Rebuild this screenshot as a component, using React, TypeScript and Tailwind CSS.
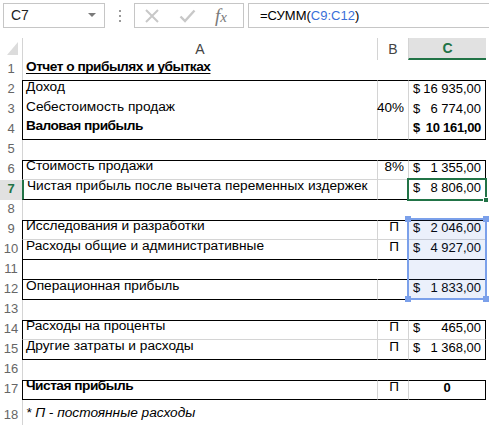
import { ReactNode } from "react";

type Line = "black" | "gray";

type Row = {
  n: number;
  a?: ReactNode;
  b?: string;
  c?: [string, string];
  cCenter?: string;
  bold?: boolean;
  box?: boolean;
  inner?: boolean;
  top?: Line;
  bottom?: Line;
  h?: string;
};

const rows: Row[] = [
  {
    n: 1,
    a: <span className="font-bold tracking-[-0.5px] underline underline-offset-2">Отчет о прибылях и убытках</span>,
  },
  { n: 2, a: "Доход", c: ["$", "16 935,00"], box: true, inner: true, top: "black" },
  { n: 3, a: "Себестоимость продаж", b: "40%", c: ["$", "6 774,00"], box: true, inner: true },
  { n: 4, a: "Валовая прибыль", c: ["$", "10 161,00"], bold: true, box: true, inner: true, bottom: "black" },
  { n: 5 },
  { n: 6, a: "Стоимость продажи", b: "8%", c: ["$", "1 355,00"], box: true, inner: true, top: "black", bottom: "gray" },
  { n: 7, a: "Чистая прибыль после вычета переменных издержек", c: ["$", "8 806,00"], box: true, inner: true, bottom: "black" },
  { n: 8 },
  { n: 9, a: "Исследования и разработки", b: "П", c: ["$", "2 046,00"], box: true, inner: true, top: "black", bottom: "gray" },
  { n: 10, a: "Расходы общие и административные", b: "П", c: ["$", "4 927,00"], box: true, inner: true, bottom: "black" },
  { n: 11, box: true, bottom: "black" },
  { n: 12, a: "Операционная прибыль", c: ["$", "1 833,00"], box: true, inner: true, bottom: "black" },
  { n: 13 },
  { n: 14, a: "Расходы на проценты", b: "П", c: ["$", "465,00"], box: true, inner: true, top: "black", bottom: "gray" },
  { n: 15, a: "Другие затраты и расходы", b: "П", c: ["$", "1 368,00"], box: true, inner: true, bottom: "black" },
  { n: 16 },
  { n: 17, a: "Чистая прибыль", b: "П", cCenter: "0", bold: true, box: true, inner: true, top: "black", bottom: "black" },
  { n: 18, a: <span className="italic">* П - постоянные расходы</span>, h: "h-[26px]" },
];

function lineClasses(row: Row) {
  const t =
    row.top === "black" ? "border-t border-t-black" : row.top === "gray" ? "border-t border-t-[#d4d4d4]" : "";
  const b =
    row.bottom === "black" ? "border-b border-b-black" : row.bottom === "gray" ? "border-b border-b-[#d4d4d4]" : "";
  return `${t} ${b}`;
}

function SheetRow({ row }: { row: Row }) {
  const lines = lineClasses(row);
  const active = row.n === 7;
  const leftA = active
    ? "border-l-2 border-l-[#217346]"
    : row.box
      ? "border-l border-l-black"
      : "border-l border-l-[#d4d4d4]";
  const innerL = row.inner ? "border-l border-l-[#d4d4d4]" : "border-l border-l-transparent";
  // "П" marks are centred, percentages are right-aligned
  const bAlign = row.b === "П" ? "justify-center pl-[2px] font-normal" : "justify-end pr-[4px]";

  return (
    <div className={`flex ${row.h || "h-[20px]"}`}>
      <div
        className={`w-[22px] flex items-end justify-center pb-[2px] text-[13px] ${
          active ? "bg-[#e1e1e1] text-[#217346] font-bold" : "text-[#666666]"
        }`}
      >
        {row.n}
      </div>
      <div
        className={`w-[355px] flex items-end pl-[3px] pb-[2px] whitespace-nowrap text-[13.7px] ${leftA} ${lines} ${
          row.bold ? "font-bold tracking-[-0.5px]" : ""
        }`}
      >
        {row.a}
      </div>
      <div className={`w-[31px] flex items-end pb-[2px] text-[13.5px] ${bAlign} ${innerL} ${lines}`}>{row.b}</div>
      <div
        className={`w-[78px] flex items-end pb-[2px] whitespace-nowrap text-[13px] ${innerL} ${
          row.box ? "border-r border-r-black" : ""
        } ${lines} ${row.bold ? "font-bold" : ""} ${row.cCenter ? "justify-center" : "justify-between pl-[4px] pr-[4px]"}`}
      >
        {row.c && (
          <>
            <span>{row.c[0]}</span>
            <span className={row.bold ? "tracking-[-0.3px]" : ""}>{row.c[1]}</span>
          </>
        )}
        {row.cCenter}
      </div>
    </div>
  );
}

function FormulaBar() {
  return (
    <div className="h-[36px] flex items-start pt-[3px]">
      <div className="ml-[3px] w-[102px] h-[25px] border border-[#c6c6c6] flex items-center justify-between pl-[7px] pr-[8px]">
        <span className="text-[14px] text-[#222222]">C7</span>
        <svg width="8" height="5" viewBox="0 0 8 5">
          <path d="M0 0 L8 0 L4 4 Z" fill="#7a7a7a" />
        </svg>
      </div>
      <div className="w-[29px] h-[25px] flex flex-col items-center justify-center gap-[3px]">
        <span className="w-[2px] h-[2px] bg-[#9a9a9a]" />
        <span className="w-[2px] h-[2px] bg-[#9a9a9a]" />
        <span className="w-[2px] h-[2px] bg-[#9a9a9a]" />
      </div>
      <div className="w-[110px] h-[25px] border border-[#c6c6c6] flex items-center pl-[9px] gap-[19px]">
        <svg width="16" height="16" viewBox="0 0 16 16">
          <path d="M2 2 L14 14 M14 2 L2 14" stroke="#c8c8c8" strokeWidth="2" fill="none" />
        </svg>
        <svg width="17" height="16" viewBox="0 0 17 16">
          <path d="M1.5 8.5 L6 13 L15.5 2.5" stroke="#c8c8c8" strokeWidth="2.4" fill="none" />
        </svg>
        <span className="italic text-[#7a7a7a] text-[19px] leading-none font-['Liberation_Serif',serif]">
          f<span className="text-[15px]">x</span>
        </span>
      </div>
      <div className="ml-[4px] flex-1 h-[25px] border border-r-0 border-[#c6c6c6] flex items-center pl-[11px] text-[13px]">
        <span>
          =СУММ(<span className="text-[#3a6fd8]">C9:C12</span>)
        </span>
      </div>
    </div>
  );
}

function HeaderRow() {
  return (
    <div className="flex h-[24px] text-[14px] text-[#444444]">
      <div className="w-[22px] relative">
        <svg className="absolute left-[7px] top-[6px]" width="12" height="13" viewBox="0 0 12 13">
          <path d="M11 0 L11 13 L0 13 Z" fill="#dcdcdc" />
        </svg>
      </div>
      <div className="w-[355px] border-l border-l-[#d4d4d4] mt-[2px] flex items-center justify-center">A</div>
      <div className="w-[31px] border-l border-l-[#d4d4d4] mt-[2px] flex items-center justify-center">B</div>
      <div className="w-[78px] border-l border-l-[#d4d4d4] mt-[2px] bg-[#e1e1e1] border-b-2 border-b-[#217346] flex items-center justify-center text-[#217346] font-bold">
        C
      </div>
    </div>
  );
}

export default function App() {
  return (
    <div className="w-[489px] h-[425px] overflow-hidden bg-white text-black font-['Liberation_Sans',Arial,sans-serif]">
      <FormulaBar />
      <HeaderRow />
      <div className="relative">
        {rows.map((row) => (
          <SheetRow key={row.n} row={row} />
        ))}

        {/* active cell C7 */}
        <div className="absolute left-[407px] top-[118px] w-[80px] h-[23px] border-2 border-[#217346]">
          <span className="absolute right-[-4px] bottom-[-4px] w-[6px] h-[6px] bg-[#217346] border border-white" />
        </div>

        {/* formula range C9:C12 */}
        <div className="absolute left-[407px] top-[158px] w-[80px] h-[82px] border-2 border-[#7ba0ea] bg-[#3a6fd8]/10">
          <span className="absolute left-[-4px] top-[-4px] w-[6px] h-[6px] bg-[#7ba0ea]" />
          <span className="absolute right-[-4px] top-[-4px] w-[6px] h-[6px] bg-[#7ba0ea]" />
          <span className="absolute left-[-4px] bottom-[-4px] w-[6px] h-[6px] bg-[#7ba0ea]" />
          <span className="absolute right-[-4px] bottom-[-4px] w-[6px] h-[6px] bg-[#7ba0ea]" />
        </div>
      </div>
    </div>
  );
}
